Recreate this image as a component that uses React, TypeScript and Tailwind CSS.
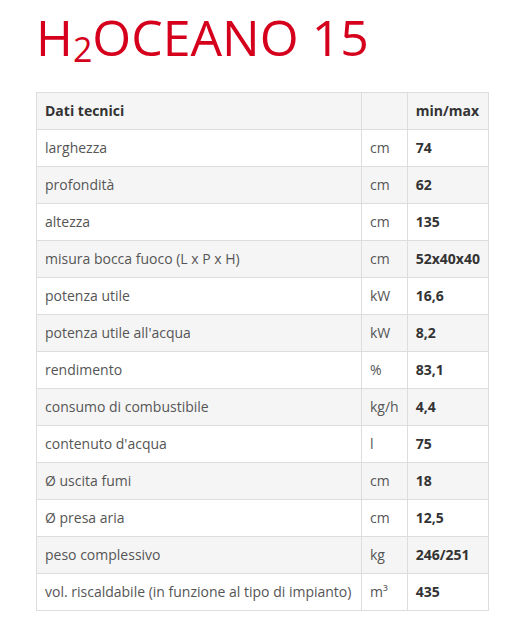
import React from 'react';

const rows: [string, string, string][] = [
  ['larghezza', 'cm', '74'],
  ['profondità', 'cm', '62'],
  ['altezza', 'cm', '135'],
  ['misura bocca fuoco (L x P x H)', 'cm', '52x40x40'],
  ['potenza utile', 'kW', '16,6'],
  ["potenza utile all'acqua", 'kW', '8,2'],
  ['rendimento', '%', '83,1'],
  ['consumo di combustibile', 'kg/h', '4,4'],
  ["contenuto d'acqua", 'l', '75'],
  ['Ø uscita fumi', 'cm', '18'],
  ['Ø presa aria', 'cm', '12,5'],
  ['peso complessivo', 'kg', '246/251'],
  ['vol. riscaldabile (in funzione al tipo di impianto)', 'm³', '435'],
];

const App: React.FC = () => {
  return (
    <div className="min-h-screen bg-white text-[#555] font-['Open_Sans',sans-serif] pl-[36px] pt-[5px]">
      {/* Title */}
      <h1 className="text-[50px] leading-[64px] font-normal text-[#d5001c] mb-[23px]">
        H<sub className="text-[34px] relative top-[6px] align-baseline">2</sub>OCEANO 15
      </h1>

      {/* Tech table */}
      <table className="w-[453px] border-collapse border border-[#ddd] text-[14px] leading-[20px]">
        <thead>
          <tr className="bg-[#f5f5f5] text-[#333]">
            <th className="w-[325px] border border-[#ddd] px-[8px] py-[8px] text-left font-bold">Dati tecnici</th>
            <th className="w-[45px] border border-[#ddd] px-[8px] py-[8px]"></th>
            <th className="border border-[#ddd] px-[8px] py-[8px] text-left font-bold">min/max</th>
          </tr>
        </thead>
        <tbody>
          {rows.map(([label, unit, value], i) => (
            <tr key={label} className={i % 2 === 1 ? 'bg-[#f5f5f5]' : 'bg-white'}>
              <td className="border border-[#ddd] px-[8px] py-[8px]">{label}</td>
              <td className="border border-[#ddd] px-[8px] py-[8px]">{unit}</td>
              <td className="border border-[#ddd] px-[8px] py-[8px] font-bold text-[#333]">{value}</td>
            </tr>
          ))}
        </tbody>
      </table>
    </div>
  );
};

export default App;
